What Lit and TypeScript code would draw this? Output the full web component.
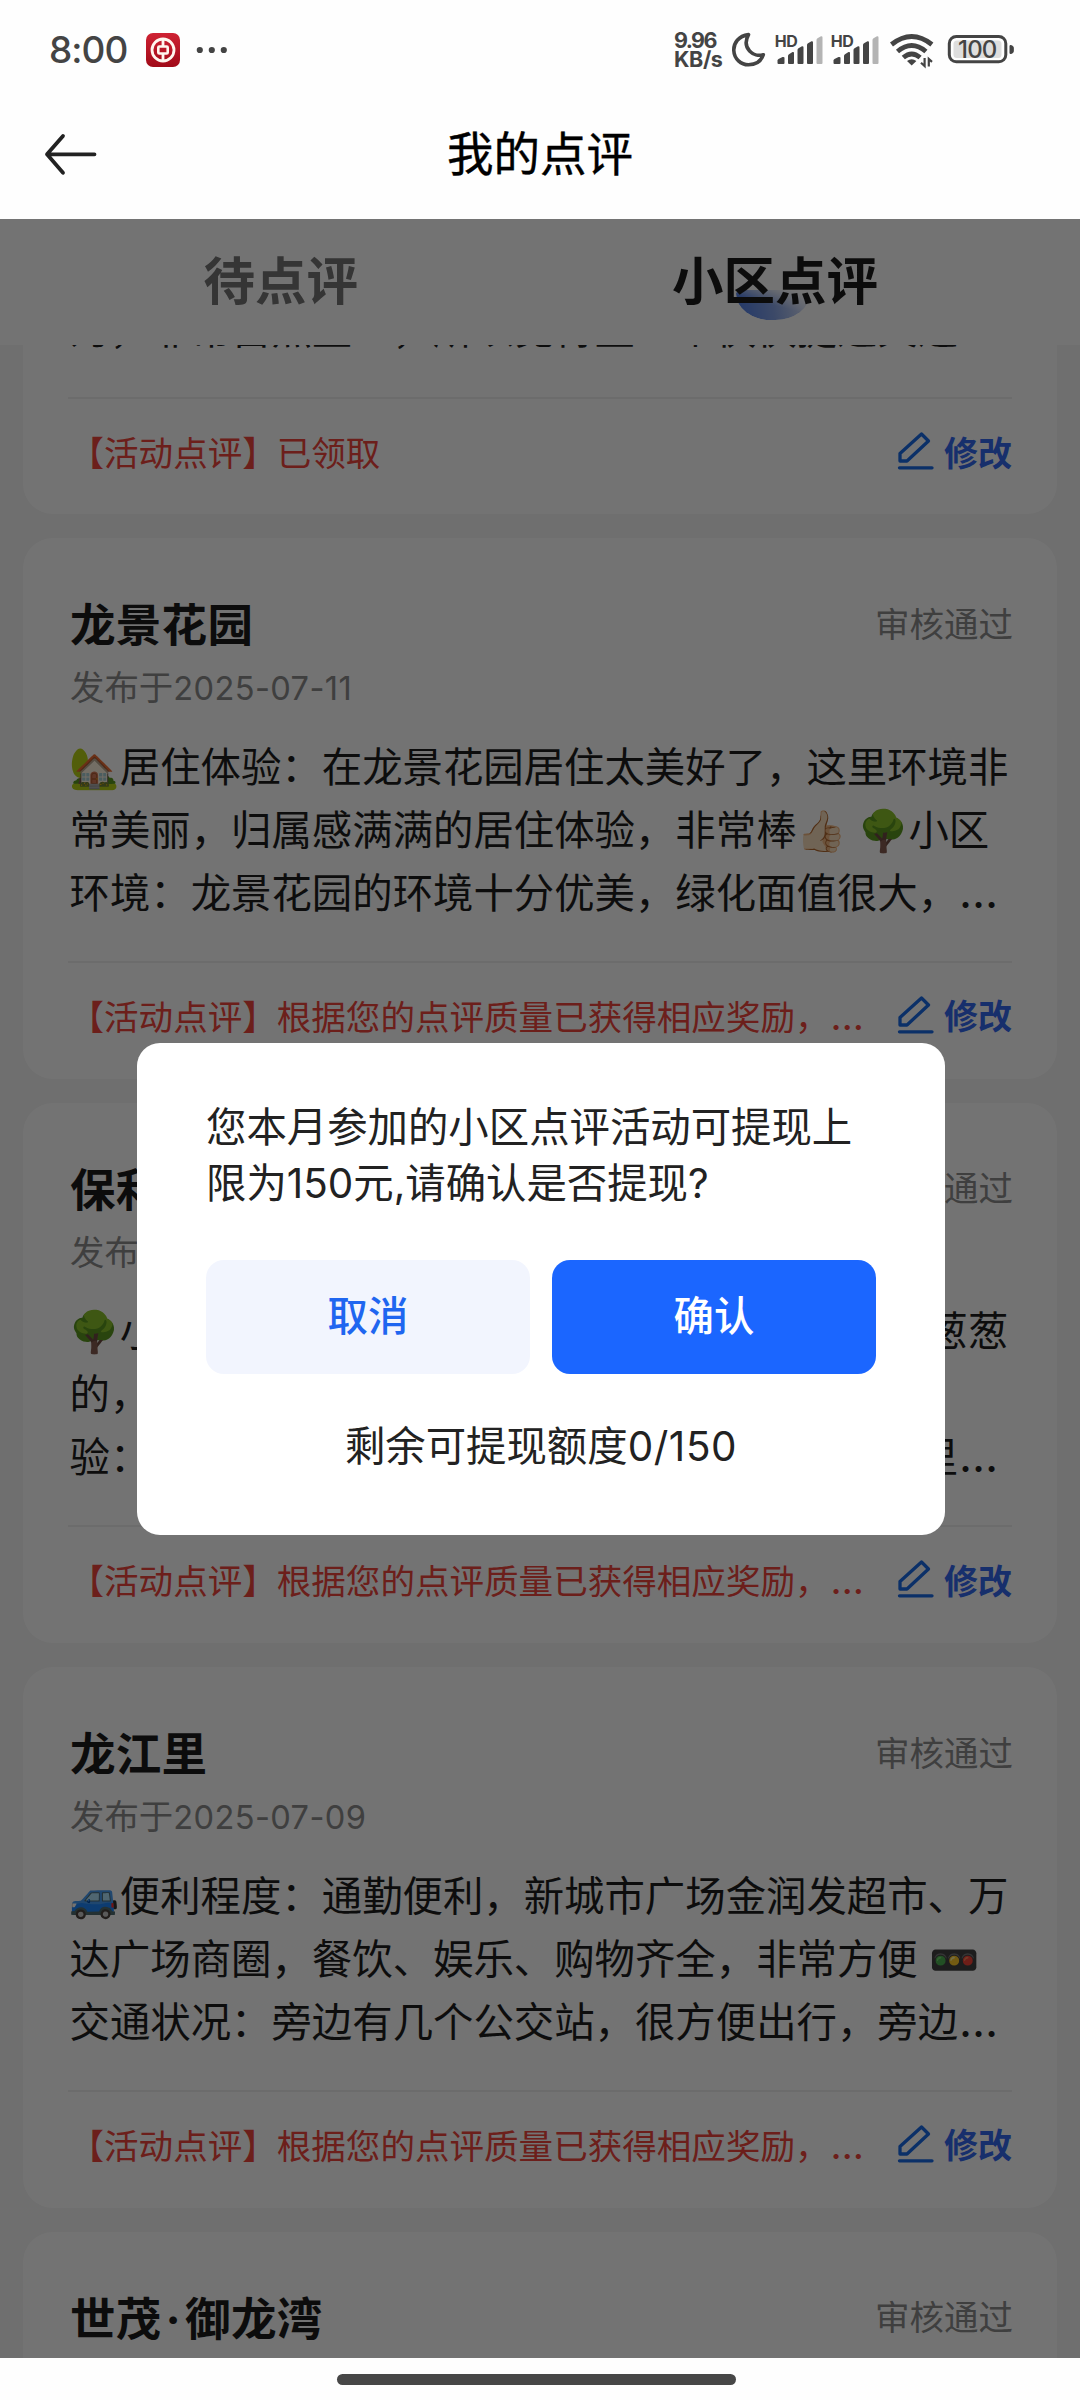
import { LitElement, html, css, svg, nothing } from "lit";
import { customElement, property } from "lit/decorators.js";

const fontStack = css`Inter, "Noto Sans CJK SC", "Noto Color Emoji", sans-serif`;

interface Review {
  title: string;
  date: string;
  lines: string[];
}

const reward = "【活动点评】根据您的点评质量已获得相应奖励，…";

const reviews: Review[] = [
  {
    title: "龙景花园",
    date: "2025-07-11",
    lines: [
      "🏡居住体验：在龙景花园居住太美好了，这里环境非",
      "常美丽，归属感满满的居住体验，非常棒👍🏻 🌳小区",
      "环境：龙景花园的环境十分优美，绿化面值很大，…",
    ],
  },
  {
    title: "保利",
    date: "2025-07-10",
    lines: [
      "🌳小区环境：小区绿化做得很好，到处都是郁郁葱葱",
      "的，空气清新，散步很舒服",
      "验：住在这里很安静，邻居友善，物业也好，这里…",
    ],
  },
  {
    title: "龙江里",
    date: "2025-07-09",
    lines: [
      "🚙便利程度：通勤便利，新城市广场金润发超市、万",
      "达广场商圈，餐饮、娱乐、购物齐全，非常方便 🚥",
      "交通状况：旁边有几个公交站，很方便出行，旁边…",
    ],
  },
];

@customElement("status-bar")
export class StatusBar extends LitElement {
  static styles = css`
    :host {
      display: flex;
      justify-content: space-between;
      height: 84px;
      padding: 30px 65px 0 49px;
      box-sizing: border-box;
      color: #444;
      font-family: ${fontStack};
    }
    .group {
      display: flex;
      height: 40px;
    }
    .clock {
      width: 97px;
      font-size: 37px;
      line-height: 40px;
      font-weight: 450;
      letter-spacing: -1px;
    }
    .speed {
      display: flex;
      flex-direction: column;
      width: 56px;
      padding-top: 1px;
      font-size: 21.5px;
      line-height: 19px;
      font-weight: 650;
      letter-spacing: -0.4px;
    }
    .speed .num {
      letter-spacing: -1.6px;
    }
    svg {
      display: block;
      overflow: visible;
    }
    .hd {
      font: 650 16px Inter, sans-serif;
      fill: #444;
      letter-spacing: -0.6px;
    }
    .level {
      font: 450 24px Inter, sans-serif;
      fill: #444;
      letter-spacing: -0.8px;
    }
  `;

  private signal() {
    return html`<svg width="56" height="40" viewBox="775 30 56 40">
      ${svg`
      <text class="hd" x="774.800" y="46.800">HD</text>
      <g fill="#444">
        <path d="M777.500 60.500Q777.500 59.500 778.500 59L782.500 57Q784.500 56.500 784.500 58V63Q784.500 64 783.500 64H778.500Q777.500 64 777.500 63Z"/>
        <path d="M788 56Q788 55 789 54.300L792.500 52Q794 51.500 794 53V63Q794 64 793 64H789Q788 64 788 63Z"/>
        <path d="M797.500 50Q797.500 49 798.500 48.300L802 46.300Q803.500 46 803.500 47.500V63Q803.500 64 802.500 64H798.500Q797.500 64 797.500 63Z"/>
        <path d="M807 45Q807 44 808 43.300L811.500 41.300Q813 41 813 42.500V63Q813 64 812 64H808Q807 64 807 63Z"/>
      </g>
      <path fill="#b4b4b4" d="M816.500 40Q816.500 39 817.500 38.300L821 36.300Q822.500 36 822.500 37.500V63Q822.500 64 821.500 64H817.500Q816.500 64 816.500 63Z"/>`}
    </svg>`;
  }

  render() {
    return html`
      <div class="group">
        <span class="clock">8:00</span>
        <svg width="90" height="40" viewBox="146 30 90 40">
          <defs>
            <linearGradient id="bank" x1="0" y1="0" x2="0" y2="1">
              <stop offset="0" stop-color="#cf2233" />
              <stop offset="1" stop-color="#a00a18" />
            </linearGradient>
          </defs>
          <rect x="146" y="33" width="34" height="34" rx="7" fill="url(#bank)" />
          <circle cx="163" cy="50" r="11" fill="none" stroke="#fff6ef" stroke-width="2.800" />
          <path d="M163 39V46M163 54V61" stroke="#fff6ef" stroke-width="2.800" />
          <rect x="158.300" y="46.500" width="9.400" height="7" rx="1" fill="none" stroke="#fff6ef" stroke-width="2.600" />
          <g fill="#444">
            <circle cx="199.800" cy="50" r="3.100" />
            <circle cx="211.800" cy="50" r="3.100" />
            <circle cx="223.800" cy="50" r="3.100" />
          </g>
        </svg>
      </div>
      <div class="group">
        <div class="speed"><span class="num">9.96</span><span>KB/s</span></div>
        <svg width="45" height="40" viewBox="730 30 45 40">
          <path
            d="M748.500 34.600C738.500 36 733.500 43 733.800 50.500C734.200 59 741 64.800 748.500 64.800C755.500 64.800 761 61.500 763.300 54.700C754 57.500 741 48.500 748.500 34.600Z"
            fill="none" stroke="#444" stroke-width="3.600" stroke-linejoin="round" />
        </svg>
        ${this.signal()} ${this.signal()}
        <svg width="59" height="40" viewBox="887 30 59 40">
          <g fill="none" stroke="#444" stroke-width="4.800">
            <path d="M891.500 44.500Q911.700 28.500 931.900 44.500" />
            <path d="M897.500 51.500Q911.700 39.500 925.900 51.500" />
            <path d="M903.300 57.500Q911.700 50.300 920.100 57.500" />
          </g>
          <path d="M907 61Q911.700 57.500 916.400 61L911.700 65.500Z" fill="#444" />
          <path d="M924.600 58V66L921 62.800M928.800 66.500V59L932 61.800" fill="none" stroke="#444" stroke-width="2.200" />
        </svg>
        <svg width="69" height="40" viewBox="946 30 69 40">
          <rect x="949.300" y="36.500" width="56.500" height="25.300" rx="7" fill="none" stroke="#444" stroke-width="3" />
          <rect x="953.500" y="40.500" width="48" height="17.500" rx="3.500" fill="#dedede" />
          <path d="M1010 45.500Q1013.300 45.500 1013.300 47.500V51.500Q1013.300 53.500 1010 53.500Z" fill="#444" stroke="#444" />
          <text class="level" x="977.300" y="58.300" text-anchor="middle">100</text>
        </svg>
      </div>
    `;
  }
}

@customElement("review-card")
export class ReviewCard extends LitElement {
  @property({ attribute: false }) heading = "";
  @property() date = "";
  @property({ attribute: false }) lines: string[] = [];
  @property() note = "";

  static styles = css`
    :host {
      display: block;
      flex: none;
      margin: 0 23px;
      padding: 51px 45px 0 47px;
      box-sizing: border-box;
      border-radius: 30px;
      background: #fff;
      font-family: ${fontStack};
    }
    .head {
      display: flex;
      justify-content: space-between;
      align-items: center;
      height: 66px;
    }
    .name {
      font-size: 45.5px;
      font-weight: 700;
      letter-spacing: 0.3px;
      color: #1c1c1c;
    }
    .dot {
      padding: 0 4px;
    }
    .status {
      font-size: 34.5px;
      color: #8c8c8c;
      line-height: 48px;
      padding-top: 5px;
      margin-right: -1px;
    }
    .date {
      display: flex;
      height: 48px;
      margin: 9px 0 23.5px;
      font-size: 34.4px;
      line-height: 48px;
      color: #8c8c8c;
    }
    .num {
      font-size: 32.6px;
      letter-spacing: 0.4px;
    }
    .line {
      height: 63px;
      margin-left: -0.5px;
      font-size: 40.4px;
      line-height: 63px;
      white-space: nowrap;
      color: #1e1e1e;
    }
    .more {
      font-size: 1.12em;
      line-height: 0;
      padding-left: 1px;
    }
    .foot {
      display: flex;
      align-items: center;
      height: 104px;
      margin: 36px 0 0 -2px;
      border-top: 2px solid #f0f0f0;
      padding-bottom: 9px;
    }
    .note {
      flex: 1;
      padding-left: 1.5px;
      white-space: nowrap;
      font-size: 34.55px;
      color: #f0463c;
    }
    .edit {
      display: flex;
      align-items: center;
      gap: 9px;
      font-size: 34px;
      font-weight: 700;
      color: #3468f0;
    }
    svg {
      display: block;
    }
  `;

  private text(value: string) {
    return value.endsWith("…")
      ? html`${value.slice(0, -1)}<span class="more">…</span>`
      : value;
  }

  render() {
    const [first, second] = this.heading.split("·");
    return html`
      ${this.heading
        ? html`<div class="head">
            <span class="name"
              >${first}${second ? html`<span class="dot">·</span>${second}` : nothing}</span
            ><span class="status">审核通过</span>
          </div>`
        : nothing}
      ${this.date
        ? html`<div class="date">发布于<span class="num">${this.date}</span></div>`
        : nothing}
      ${this.lines.map((line) => html`<div class="line">${this.text(line)}</div>`)}
      ${this.note
        ? html`<div class="foot">
            <span class="note">${this.text(this.note)}</span>
            <span class="edit">
              <svg width="38" height="40" viewBox="0 0 38 40" fill="none" stroke="#1a6ae6" stroke-width="3.300" stroke-linejoin="round" stroke-linecap="round">
                <path d="M24.500 3L31.500 10L10 30H3V22.500Z" />
                <path d="M2.500 36.800H35" />
              </svg>
              修改
            </span>
          </div>`
        : nothing}
    `;
  }
}

@customElement("withdraw-dialog")
export class WithdrawDialog extends LitElement {
  static styles = css`
    :host {
      display: block;
      width: 808px;
      height: 492px;
      box-sizing: border-box;
      padding: 57px 69px 0;
      border-radius: 23px;
      background: #fff;
      font-family: ${fontStack};
      font-size: 40.4px;
      color: #222;
    }
    .message {
      margin: 0;
      line-height: 56px;
    }
    .actions {
      display: grid;
      grid-template-columns: 1fr 1fr;
      gap: 22px;
      margin: 48px 0 45px;
    }
    button {
      height: 114px;
      padding: 0 0 7px;
      border: 0;
      border-radius: 18px;
      font: inherit;
      font-weight: 500;
    }
    .cancel {
      background: #f2f5fe;
      color: #1f66f0;
    }
    .confirm {
      background: #1b66ff;
      color: #fff;
    }
    .quota {
      text-align: center;
      line-height: 56px;
    }
    .quota span {
      letter-spacing: 0.6px;
    }
  `;

  render() {
    return html`
      <p class="message">您本月参加的小区点评活动可提现上限为150元,请确认是否提现?</p>
      <div class="actions">
        <button class="cancel">取消</button>
        <button class="confirm">确认</button>
      </div>
      <div class="quota">剩余可提现额度<span>0/150</span></div>
    `;
  }
}

@customElement("app-root")
export class AppRoot extends LitElement {
  static styles = css`
    :host {
      display: flex;
      flex-direction: column;
      width: 1080px;
      height: 2400px;
      overflow: hidden;
      background: #fefefe;
      font-family: ${fontStack};
    }
    .nav {
      display: grid;
      grid-template-columns: 150px 1fr 150px;
      align-items: center;
      height: 135px;
      box-sizing: border-box;
    }
    .nav svg {
      margin: 5px 0 0 44px;
    }
    .nav-title {
      text-align: center;
      font-size: 46.5px;
      color: #000;
      line-height: 60px;
      margin-top: 4px;
      -webkit-text-stroke: 0.4px #000;
    }
    .main {
      position: relative;
      display: flex;
      flex-direction: column;
      height: 2139px;
      overflow: hidden;
      background: #f5f5f5;
    }
    .tabs {
      display: flex;
      justify-content: space-between;
      height: 126px;
      box-sizing: border-box;
      padding: 30px 202px 0 203.5px;
      background: #fff;
      font-size: 51.5px;
      line-height: 64px;
      font-weight: 700;
      color: #757575;
    }
    .tab {
      position: relative;
      z-index: 0;
    }
    .active {
      color: #1c1c1c;
    }
    .active::before {
      content: "";
      position: absolute;
      z-index: -1;
      left: 64px;
      top: 41px;
      width: 74px;
      height: 30px;
      border-radius: 6px 0 37px 37px / 4px 0 28px 28px;
      background: linear-gradient(80deg, #4c7ce8 0%, #86a3e6 50%, rgba(200, 212, 245, 0.5) 100%);
      -webkit-mask-image: linear-gradient(195deg, transparent 10%, #000 50%);
      mask-image: linear-gradient(195deg, transparent 10%, #000 50%);
    }
    .list {
      display: flex;
      flex-direction: column;
      gap: 24px;
      height: 2013px;
      overflow: hidden;
    }
    .list > review-card {
      height: 540.5px;
    }
    .tail {
      display: flex;
      height: 169.2px;
      flex: none;
      overflow: hidden;
    }
    .tail review-card {
      flex: 1;
      height: auto;
      margin-top: -47px;
      padding-top: 0;
      border-top-left-radius: 0;
      border-top-right-radius: 0;
    }
    .mask {
      position: absolute;
      inset: 0;
      display: flex;
      align-items: center;
      justify-content: center;
      padding-left: 2px;
      background: rgba(0, 0, 0, 0.55);
    }
    .home {
      display: flex;
      justify-content: center;
      padding-top: 16px;
      height: 26px;
    }
    .home-bar {
      width: 399px;
      height: 11px;
      margin-right: 8px;
      border-radius: 6px;
      background: #474747;
    }
  `;

  render() {
    return html`
      <status-bar></status-bar>
      <header class="nav">
        <svg width="54" height="46" viewBox="44 131 54 46" fill="none" stroke="#222" stroke-width="3.800" stroke-linecap="round" stroke-linejoin="round">
          <path d="M94.500 154.300H47M63 136L47 154.300L63 172.800" />
        </svg>
        <div class="nav-title">我的点评</div>
      </header>
      <main class="main">
        <nav class="tabs">
          <span class="tab">待点评</span>
          <span class="tab active">小区点评</span>
        </nav>
        <section class="list">
          <div class="tail">
            <review-card
              .lines=${["为，非常自然里一，所以觉得里一个快快捷道又近"]}
              .note=${"【活动点评】已领取"}
            ></review-card>
          </div>
          ${reviews.map(
            (r) => html`<review-card
              .heading=${r.title}
              .date=${r.date}
              .lines=${r.lines}
              .note=${reward}
            ></review-card>`
          )}
          <review-card .heading=${"世茂·御龙湾"}></review-card>
        </section>
        <div class="mask"><withdraw-dialog></withdraw-dialog></div>
      </main>
      <footer class="home"><div class="home-bar"></div></footer>
    `;
  }
}
